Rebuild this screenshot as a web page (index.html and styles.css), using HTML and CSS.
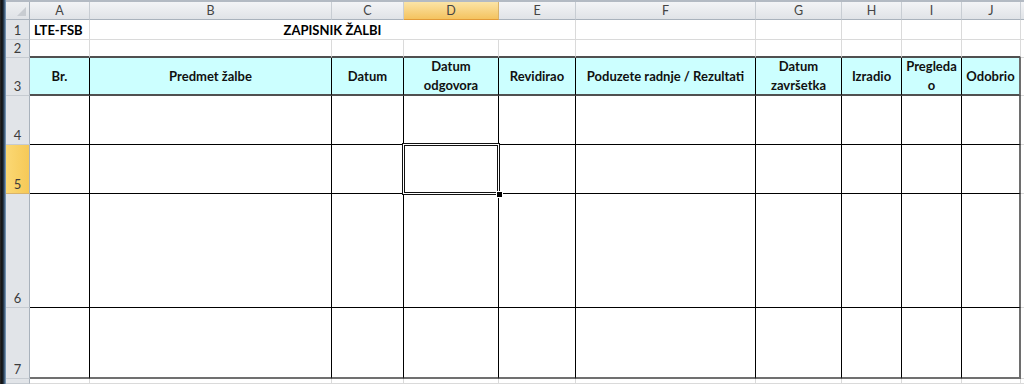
FILE: index.html
```html
<!DOCTYPE html>
<html>
<head>
    <meta charset="utf-8">
    <title>Zapisnik žalbi</title>
    <link rel="stylesheet" href="styles.css">
</head>
<body>
    <div class="frame-edge"></div>

    <div class="sheet">
        <!-- column headers -->
        <div class="corner">
            <svg width="9" height="9" viewBox="0 0 9 9"><polygon points="9,0 9,9 0,9" fill="#c8ccd1"/></svg>
        </div>
        <div class="hd">A</div>
        <div class="hd">B</div>
        <div class="hd">C</div>
        <div class="hd active">D</div>
        <div class="hd">E</div>
        <div class="hd">F</div>
        <div class="hd">G</div>
        <div class="hd">H</div>
        <div class="hd">I</div>
        <div class="hd">J</div>
        <div class="hd"></div>

        <!-- row 1 -->
        <div class="rh">1</div>
        <div class="c bold left">LTE-FSB</div>
        <div class="c bold merged">ZAPISNIK ŽALBI</div>
        <div class="c"></div>
        <div class="c"></div>
        <div class="c"></div>
        <div class="c"></div>
        <div class="c"></div>
        <div class="c"></div>

        <!-- row 2 -->
        <div class="rh">2</div>
        <div class="c above"></div>
        <div class="c above"></div>
        <div class="c above"></div>
        <div class="c above"></div>
        <div class="c above"></div>
        <div class="c above"></div>
        <div class="c above"></div>
        <div class="c above"></div>
        <div class="c above"></div>
        <div class="c above"></div>
        <div class="c"></div>

        <!-- row 3: table head -->
        <div class="rh">3</div>
        <div class="th">Br.</div>
        <div class="th">Predmet žalbe</div>
        <div class="th">Datum</div>
        <div class="th">Datum<br>odgovora</div>
        <div class="th">Revidirao</div>
        <div class="th">Poduzete radnje / Rezultati</div>
        <div class="th">Datum<br>završetka</div>
        <div class="th">Izradio</div>
        <div class="th">Pregleda<br>o</div>
        <div class="th last">Odobrio</div>
        <div class="c"></div>

        <!-- row 4 -->
        <div class="rh">4</div>
        <div class="tc"></div>
        <div class="tc"></div>
        <div class="tc"></div>
        <div class="tc"></div>
        <div class="tc"></div>
        <div class="tc"></div>
        <div class="tc"></div>
        <div class="tc"></div>
        <div class="tc"></div>
        <div class="tc last"></div>
        <div class="c"></div>

        <!-- row 5 -->
        <div class="rh active">5</div>
        <div class="tc"></div>
        <div class="tc"></div>
        <div class="tc"></div>
        <div class="tc selected">
            <div class="sel-box"></div>
            <div class="fill-handle"></div>
        </div>
        <div class="tc"></div>
        <div class="tc"></div>
        <div class="tc"></div>
        <div class="tc"></div>
        <div class="tc"></div>
        <div class="tc last"></div>
        <div class="c"></div>

        <!-- row 6 -->
        <div class="rh">6</div>
        <div class="tc"></div>
        <div class="tc"></div>
        <div class="tc"></div>
        <div class="tc"></div>
        <div class="tc"></div>
        <div class="tc"></div>
        <div class="tc"></div>
        <div class="tc"></div>
        <div class="tc"></div>
        <div class="tc last"></div>
        <div class="c"></div>

        <!-- row 7 -->
        <div class="rh">7</div>
        <div class="tc bottom"></div>
        <div class="tc bottom"></div>
        <div class="tc bottom"></div>
        <div class="tc bottom"></div>
        <div class="tc bottom"></div>
        <div class="tc bottom"></div>
        <div class="tc bottom"></div>
        <div class="tc bottom"></div>
        <div class="tc bottom"></div>
        <div class="tc bottom last"></div>
        <div class="c"></div>

        <!-- row 8 -->
        <div class="rh"></div>
        <div class="c"></div>
        <div class="c"></div>
        <div class="c"></div>
        <div class="c"></div>
        <div class="c"></div>
        <div class="c"></div>
        <div class="c"></div>
        <div class="c"></div>
        <div class="c"></div>
        <div class="c"></div>
        <div class="c"></div>
    </div>
</body>
</html>
```

FILE: styles.css
```css
body {
    margin: 0;
    width: 1024px;
    height: 384px;
    overflow: hidden;
    display: flex;
    background-color: #ffffff;
    font-family: Lato, "Open Sans", sans-serif;
}

/* dark window edge on the left */
.frame-edge {
    width: 6px;
    flex-shrink: 0;
    background: linear-gradient(to right, #2c2c2c 0, #0e0e0e 2px, #2e465f 4px, #86a9cb 6px);
}

.sheet {
    flex: 1;
    display: grid;
    grid-template-columns: 24px 60px 242px 72px 95px 77px 180px 86px 60px 60px 59px 1fr;
    grid-template-rows: 18px 20px 18px 38px 49px 49px 114px 71px 1fr;
    border-top: 2px solid #b3bac3;
}

.sheet > div {
    box-sizing: border-box;
}

/* Headers */
.corner {
    display: flex;
    align-items: flex-end;
    justify-content: flex-end;
    padding: 0 3px 3px 0;
    background: linear-gradient(#eef0f2, #dfe2e6);
    border-right: 1px solid #a9b2bc;
    border-bottom: 1px solid #a9b2bc;
}

.hd {
    display: flex;
    align-items: center;
    justify-content: center;
    font-size: 12.5px;
    color: #444;
    background: linear-gradient(#f3f4f6, #e0e3e7);
    border-right: 1px solid #c8cdd3;
    border-bottom: 1px solid #a9b2bc;
}

.hd.active {
    background: linear-gradient(#fbe4a6, #f4c35f);
    border-bottom-color: #e29b38;
    border-right-color: #d9b36a;
}

.rh {
    display: flex;
    align-items: flex-end;
    justify-content: center;
    padding-bottom: 1px;
    font-size: 13px;
    color: #3c3c3c;
    background-color: #e1e4e8;
    border-right: 1px solid #a9b2bc;
    border-bottom: 1px solid #c6cbd1;
}

.rh.active {
    background: linear-gradient(to right, #fbd874, #f6c957);
    border-bottom-color: #d9b36a;
}

/* Plain cells */
.c {
    display: flex;
    align-items: flex-end;
    padding: 0 4px 1px;
    font-size: 13px;
    color: #000;
    border-right: 1px solid #dadada;
    border-bottom: 1px solid #dadada;
    white-space: nowrap;
}

.c.bold {
    font-weight: bold;
}

.c.merged {
    grid-column: span 4;
    justify-content: center;
}

.c.above {
    border-bottom: 2px solid #505050;
}

/* Complaint table */
.th {
    display: flex;
    align-items: center;
    justify-content: center;
    text-align: center;
    font-size: 13px;
    font-weight: bold;
    line-height: 19px;
    color: #111;
    background-color: #ccffff;
    border-right: 1px solid #000;
    border-bottom: 2px solid #505050;
}

.tc {
    border-right: 1px solid #000;
    border-bottom: 1px solid #000;
}

.th.last,
.tc.last {
    border-right: 2px solid #6e6e6e;
}

.tc.bottom {
    border-bottom: 2px solid #707070;
}

/* Active cell D5 */
.selected {
    position: relative;
}

.sel-box {
    position: absolute;
    left: -2px;
    top: -2px;
    right: -2px;
    bottom: -2px;
    border: 1px solid #111;
    box-shadow: inset 0 0 0 1px #fff, inset 0 0 0 2px #111;
}

.fill-handle {
    position: absolute;
    right: -5px;
    bottom: -5px;
    width: 5px;
    height: 5px;
    background-color: #000;
    border: 1px solid #fff;
}
```
